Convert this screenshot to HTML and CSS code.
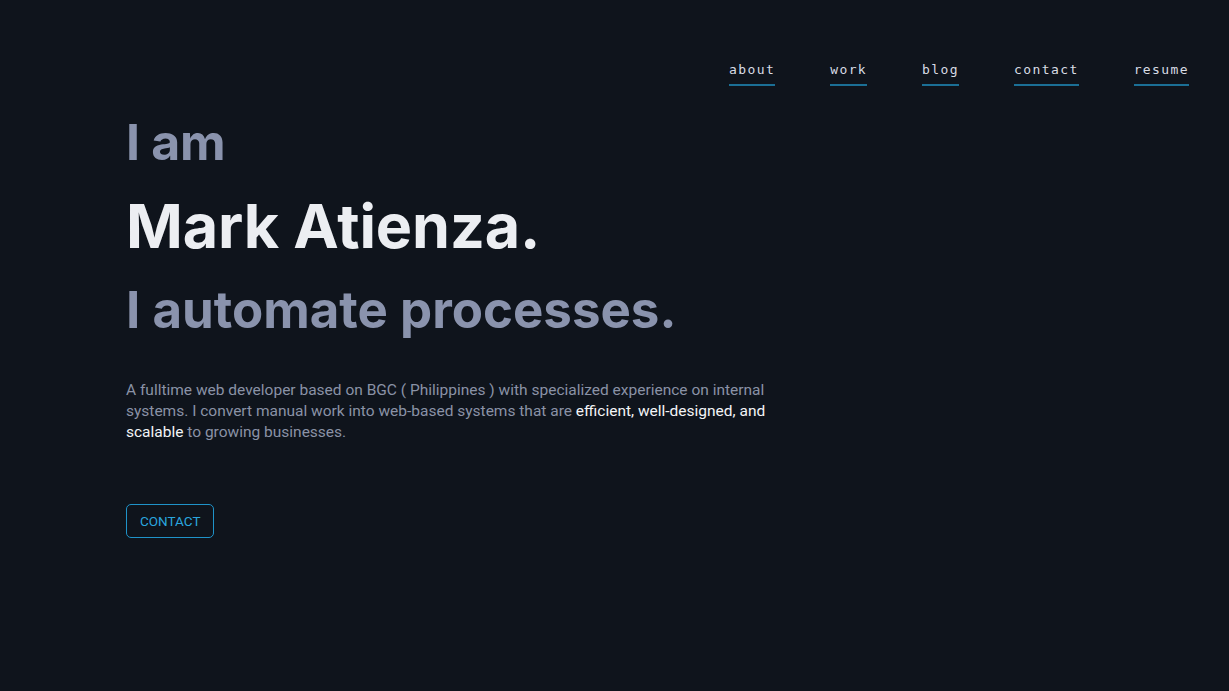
FILE: index.html
```html
<!DOCTYPE html>
<html lang="en">
<head>
<meta charset="utf-8">
<title>Mark Atienza</title>
<link rel="stylesheet" href="styles.css">
</head>
<body>
<header class="topbar">
  <nav class="nav">
    <a class="nav-link" href="#">about</a>
    <a class="nav-link" href="#">work</a>
    <a class="nav-link" href="#">blog</a>
    <a class="nav-link" href="#">contact</a>
    <a class="nav-link" href="#">resume</a>
  </nav>
</header>
<main class="hero">
  <h2 class="intro">I am</h2>
  <h1 class="name">Mark Atienza.</h1>
  <h2 class="tagline">I automate processes.</h2>
  <p class="bio">A fulltime web developer based on BGC ( Philippines ) with specialized experience on internal systems. I convert manual work into web-based systems that are <span class="hl">efficient, well-designed, and scalable</span> to growing businesses.</p>
  <a class="btn" href="#">CONTACT</a>
</main>
</body>
</html>
```
FILE: styles.css
```css
* { box-sizing: border-box; }
html, body { margin: 0; padding: 0; }
body {
  background: #0f141c;
  min-height: 691px;
  font-family: Inter, "Noto Sans", sans-serif;
  color: #eceef2;
}
.topbar {
  display: flex;
  justify-content: flex-end;
  padding: 61px 40px 0 0;
}
.nav {
  display: flex;
  gap: 55px;
}
.nav-link {
  font-family: "DejaVu Sans Mono", "Liberation Mono", monospace;
  font-size: 13px;
  letter-spacing: 1.4px;
  color: #d8dce4;
  text-decoration: none;
  padding-bottom: 5px;
  border-bottom: 2px solid #1b6f95;
  line-height: 18px;
}
.hero {
  padding: 0 0 0 126px;
  margin-top: 28px;
}
.intro, .name, .tagline { margin: 0; font-weight: 700; }
.intro {
  font-size: 50px;
  line-height: 56px;
  color: #8a93ad;
  letter-spacing: -0.3px;
}
.name {
  font-size: 61px;
  line-height: 72px;
  margin-top: 20px;
  color: #eceef2;
  letter-spacing: -0.1px;
}
.tagline {
  font-size: 51px;
  line-height: 56px;
  margin-top: 20px;
  color: #8a93ad;
  letter-spacing: 0;
}
.bio {
  font-family: Roboto, "Noto Sans", sans-serif;
  font-size: 15.5px;
  line-height: 21px;
  color: #8a92a6;
  max-width: 660px;
  margin: 42px 0 0 0;
}
.hl { color: #f3f4f7; }
.btn {
  display: inline-block;
  margin-top: 61px;
  padding: 0 13px;
  height: 34px;
  line-height: 32px;
  border: 1px solid #1f93c9;
  border-radius: 5px;
  color: #2aa6df;
  font-family: Roboto, "Noto Sans", sans-serif;
  font-size: 13.5px;
  text-decoration: none;
}
```
